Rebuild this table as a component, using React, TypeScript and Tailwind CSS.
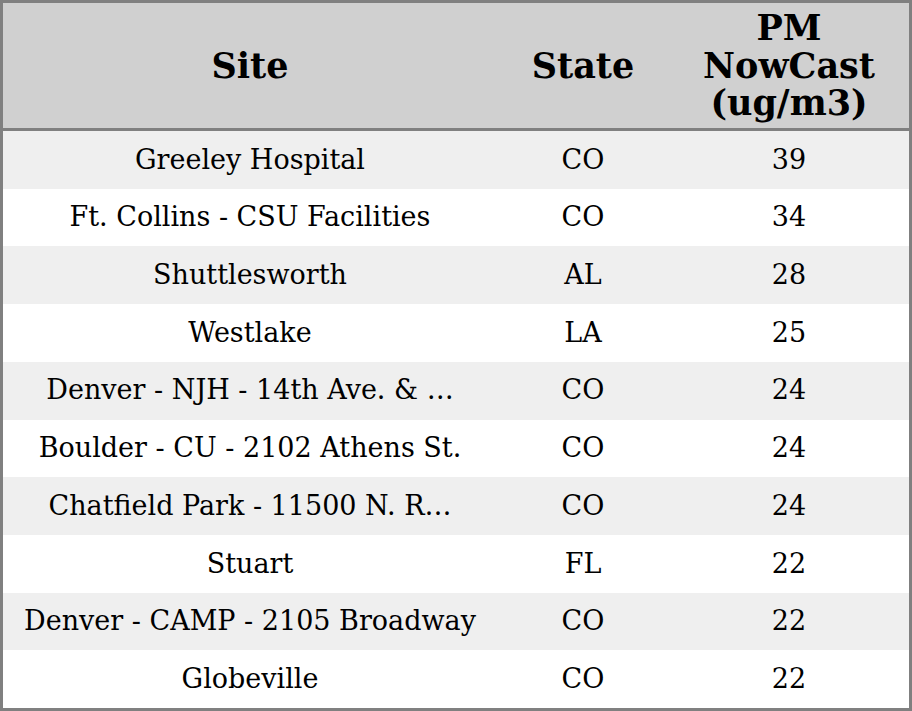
const rows: [string, string, string][] = [
  ["Greeley Hospital", "CO", "39"],
  ["Ft. Collins - CSU Facilities", "CO", "34"],
  ["Shuttlesworth", "AL", "28"],
  ["Westlake", "LA", "25"],
  ["Denver - NJH - 14th Ave. & …", "CO", "24"],
  ["Boulder - CU - 2102 Athens St.", "CO", "24"],
  ["Chatfield Park - 11500 N. R…", "CO", "24"],
  ["Stuart", "FL", "22"],
  ["Denver - CAMP - 2105 Broadway", "CO", "22"],
  ["Globeville", "CO", "22"],
];

export default function App() {
  return (
    <div
      className="w-[912px] h-[711px] border-[3px] border-[#808080] bg-white text-black flex flex-col overflow-hidden"
      style={{ fontFamily: '"DejaVu Serif", serif' }}
    >
      {/* header */}
      <div className="flex h-[128px] shrink-0 bg-[#d0d0d0] border-b-[3px] border-[#808080] font-bold text-[35px] leading-[37.5px]">
        <div className="w-[494px] flex items-center justify-center">Site</div>
        <div className="w-[172px] flex items-center justify-center">State</div>
        <div className="flex-1 flex items-center justify-center text-center">
          PM<br />NowCast<br />(ug/m3)
        </div>
      </div>

      {/* rows */}
      <div className="flex-1 flex flex-col text-[27px]">
        {rows.map(([site, state, value], i) => (
          <div
            key={i}
            className={`flex flex-1 items-center ${i % 2 === 0 ? "bg-[#efefef]" : "bg-white"}`}
          >
            <div className="w-[494px] text-center whitespace-nowrap">{site}</div>
            <div className="w-[172px] text-center">{state}</div>
            <div className="flex-1 text-center">{value}</div>
          </div>
        ))}
      </div>
    </div>
  );
}
